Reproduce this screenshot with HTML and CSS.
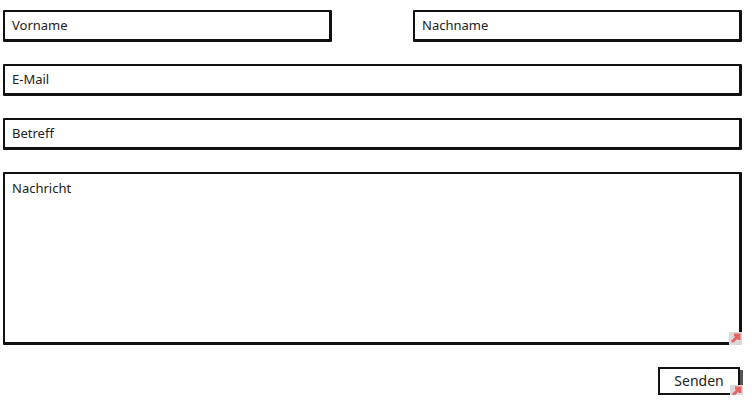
FILE: index.html
```html
<!DOCTYPE html>
<html lang="de">
<head>
    <meta charset="UTF-8">
    <meta name="viewport" content="width=device-width, initial-scale=1.0">
    <title>Kontakt</title>
    <link rel="stylesheet" href="styles.css">
</head>
<body>
    <form class="form">
        <div class="row two">
            <div class="field">Vorname</div>
            <div class="field">Nachname</div>
        </div>
        <div class="field">E-Mail</div>
        <div class="field">Betreff</div>
        <div class="field area">
            Nachricht
            <svg class="grip" width="13" height="13" viewBox="0 0 13 13">
                <rect x="0" y="0" width="13" height="13" fill="#d9d9d9"/>
                <path d="M3 10 L9 4 M5 3 H10 V8" stroke="#e46464" stroke-width="3" fill="none"/>
            </svg>
        </div>
        <div class="actions">
            <div class="button">
                Senden
                <svg class="grip" width="13" height="13" viewBox="0 0 13 13">
                    <rect x="0" y="0" width="13" height="13" fill="#d9d9d9"/>
                    <path d="M3 10 L9 4 M5 3 H10 V8" stroke="#e46464" stroke-width="3" fill="none"/>
                </svg>
            </div>
        </div>
    </form>
</body>
</html>
```
FILE: styles.css
```css
body {
    margin: 0;
    background-color: #fff;
    font-family: "Noto Sans", Lato, sans-serif;
    font-size: 13px;
    color: #222;
}

.form {
    display: flex;
    flex-direction: column;
    gap: 22px;
    padding: 10px 10px 0 3px;
}

.row.two {
    display: grid;
    grid-template-columns: 1fr 1fr;
    column-gap: 81px;
}

.field {
    position: relative;
    box-sizing: border-box;
    height: 32px;
    padding: 4px 7px;
    border: 2px solid #111;
    border-right-width: 3px;
    border-bottom-width: 3px;
    border-radius: 1px;
    line-height: 18px;
}

.field.area {
    height: 173px;
    padding-top: 5px;
}

.grip {
    position: absolute;
    right: -3px;
    bottom: -3px;
    z-index: 1;
}

.actions {
    display: flex;
    justify-content: flex-end;
    padding-right: 2px;
}

.button {
    position: relative;
    box-sizing: border-box;
    width: 82px;
    height: 28px;
    padding-top: 3px;
    border: 2px solid #111;
    text-align: center;
    font-size: 14px;
    line-height: 18px;
    box-shadow: 3px 3px 0 #555;
}

.button .grip {
    right: -5px;
    bottom: -5px;
}
```
